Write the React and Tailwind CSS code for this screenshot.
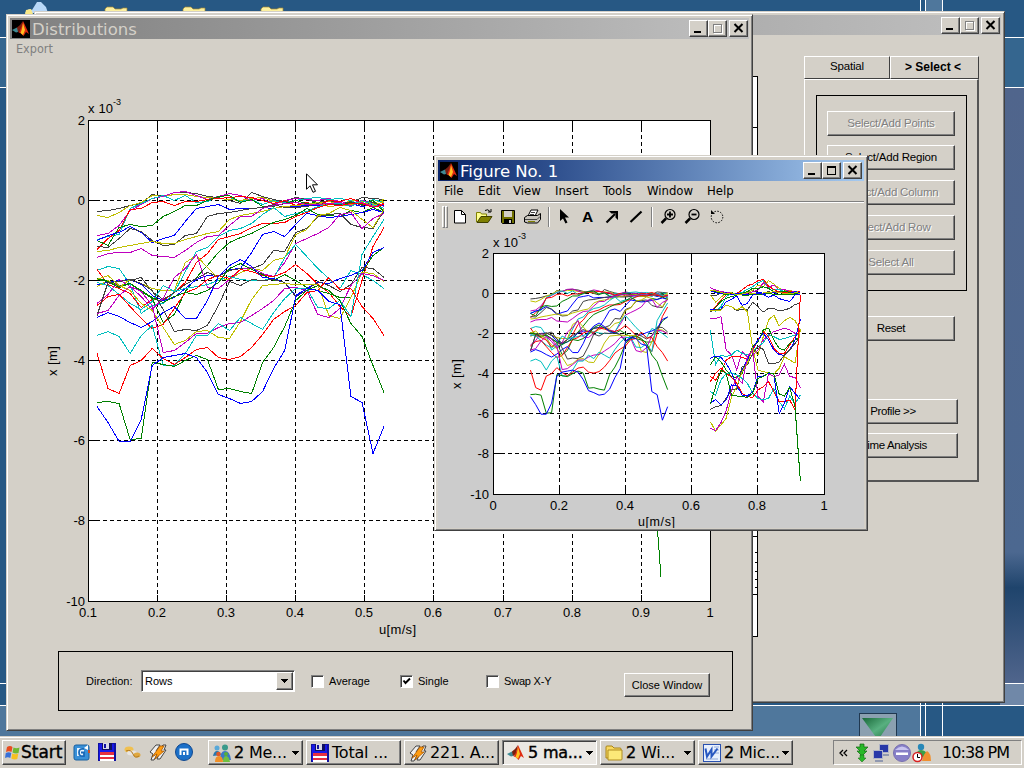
import React from "react";

const C = {
  b: "#0000ff", g: "#008000", r: "#ff0000", c: "#00bfbf", m: "#bf00bf", y: "#bfbf00", k: "#404040",
};

const LEFT = [
  ["k", [211, 210, 208, 205, 203, 194, 196, 192, 192, 193, 196, 197, 200, 203, 192, 196, 199, 201, 197, 199, 202, 200, 203, 202, 197, 198, 199]],
  ["y", [215, 217, 212, 205, 202, 195, 196, 194, 194, 196, 197, 198, 199, 200, 198, 197, 201, 202, 202, 205, 203, 201, 204, 200, 201, 203, 199]],
  ["m", [235, 233, 225, 210, 204, 198, 196, 192, 191, 195, 199, 196, 193, 195, 200, 198, 204, 200, 198, 199, 200, 198, 201, 203, 200, 202, 206]],
  ["c", [239, 236, 234, 208, 203, 198, 195, 200, 195, 202, 201, 196, 197, 201, 199, 204, 200, 202, 200, 198, 197, 199, 198, 200, 205, 199, 202]],
  ["r", [249, 238, 230, 209, 208, 202, 201, 205, 201, 201, 199, 198, 197, 196, 197, 200, 203, 200, 205, 202, 205, 200, 201, 198, 202, 206, 203]],
  ["g", [240, 245, 227, 224, 226, 225, 216, 211, 205, 205, 200, 196, 195, 202, 199, 206, 206, 203, 200, 203, 202, 206, 205, 202, 204, 200, 211]],
  ["b", [240, 235, 232, 226, 232, 242, 238, 235, 221, 208, 206, 204, 209, 208, 208, 207, 208, 206, 206, 205, 205, 203, 205, 203, 206, 204, 205]],
  ["k", [246, 247, 238, 228, 231, 240, 245, 244, 235, 233, 216, 213, 212, 210, 208, 207, 204, 207, 207, 206, 203, 204, 204, 201, 205, 202, 208]],
  ["y", [251, 250, 247, 245, 243, 241, 243, 243, 239, 236, 233, 231, 219, 215, 213, 211, 208, 206, 205, 204, 202, 206, 205, 204, 202, 205, 201]],
  ["m", [257, 253, 252, 252, 248, 255, 256, 257, 250, 242, 236, 235, 225, 216, 216, 208, 205, 203, 202, 204, 204, 203, 202, 205, 202, 206, 204]],
  ["c", [270, 266, 268, 284, 313, 305, 303, 292, 271, 251, 247, 236, 230, 228, 223, 214, 207, 216, 213, 211, 206, 204, 203, 206, 200, 204, 208]],
  ["r", [269, 284, 288, 293, 307, 299, 300, 292, 282, 262, 253, 239, 236, 233, 227, 223, 223, 222, 216, 212, 207, 204, 205, 203, 203, 207, 204]],
  ["g", [278, 280, 285, 283, 291, 298, 322, 314, 291, 277, 265, 252, 242, 237, 233, 227, 222, 219, 215, 208, 214, 215, 216, 210, 212, 207, 212]],
  ["b", [284, 282, 280, 279, 284, 295, 300, 297, 288, 279, 275, 276, 269, 268, 252, 234, 231, 236, 224, 213, 215, 217, 216, 214, 212, 209, 212]],
  ["k", [315, 282, 286, 280, 277, 291, 299, 292, 284, 278, 272, 276, 270, 268, 268, 264, 250, 251, 232, 228, 216, 214, 213, 224, 227, 228, 210]],
  ["y", [286, 280, 287, 279, 283, 288, 290, 290, 262, 255, 267, 278, 279, 272, 268, 270, 260, 257, 234, 229, 215, 213, 207, 210, 219, 227, 209]],
  ["m", [303, 294, 279, 286, 296, 309, 298, 277, 268, 254, 287, 288, 279, 269, 267, 273, 276, 262, 243, 238, 233, 227, 214, 212, 228, 218, 213]],
  ["c", [282, 285, 294, 303, 309, 301, 285, 291, 288, 286, 284, 280, 276, 279, 280, 280, 278, 257, 244, 256, 268, 278, 288, 270, 274, 280, 288]],
  ["r", [305, 296, 294, 306, 318, 328, 324, 308, 292, 288, 279, 275, 278, 269, 271, 275, 276, 272, 264, 273, 284, 292, 306, 316, 280, 246, 227]],
  ["g", [279, 281, 287, 283, 290, 297, 302, 296, 292, 294, 290, 282, 268, 263, 269, 274, 280, 274, 280, 287, 290, 293, 297, 297, 272, 255, 247]],
  ["b", [317, 312, 316, 322, 327, 321, 312, 306, 318, 318, 300, 276, 265, 259, 266, 277, 278, 282, 295, 288, 282, 283, 278, 275, 270, 252, 247]],
  ["k", [315, 282, 281, 279, 283, 290, 309, 331, 329, 330, 325, 305, 281, 285, 279, 280, 279, 282, 296, 290, 281, 285, 291, 284, 267, 268, 277]],
  ["y", [279, 275, 285, 290, 303, 310, 327, 344, 340, 331, 330, 337, 338, 321, 299, 285, 284, 283, 284, 284, 284, 315, 318, 297, 272, 273, 281]],
  ["m", [313, 310, 295, 286, 291, 305, 352, 350, 342, 333, 333, 327, 323, 322, 315, 308, 300, 288, 287, 290, 314, 317, 308, 285, 273, 275, 280]],
  ["c", [335, 331, 336, 353, 335, 325, 365, 365, 353, 335, 335, 323, 330, 317, 323, 329, 312, 298, 288, 288, 307, 308, 300, 316, 254, 236, 219]],
  ["r", [353, 388, 393, 365, 360, 348, 358, 364, 357, 349, 347, 357, 359, 356, 347, 334, 319, 311, 305, 292, 290, 277, 289, 288, 306, 318, 335]],
  ["g", [402, 401, 403, 439, 438, 362, 364, 366, 360, 355, 359, 389, 388, 391, 393, 362, 347, 326, 300, 290, 285, 290, 300, 323, 336, 365, 392]],
  ["b", [406, 422, 441, 441, 419, 365, 357, 355, 353, 357, 372, 394, 398, 403, 401, 391, 368, 350, 296, 288, 290, 301, 304, 396, 402, 453, 426]],
];

const RIGHT = [
  ["k", [165, 168, 158, 158, 160, 162, 160, 155, 152, 157, 160, 155, 158, 153, 158, 156, 155, 153]],
  ["y", [165, 186, 172, 160, 163, 160, 158, 155, 152, 135, 140, 122, 132, 145, 150, 152, 154, 156]],
  ["m", [143, 150, 155, 157, 160, 163, 160, 160, 155, 150, 128, 142, 135, 150, 148, 154, 156, 158]],
  ["c", [208, 214, 200, 170, 160, 164, 157, 148, 140, 128, 122, 140, 150, 148, 156, 155, 158, 156]],
  ["r", [215, 200, 180, 165, 160, 160, 150, 137, 132, 122, 118, 139, 148, 156, 158, 155, 158, 154]],
  ["g", [150, 155, 160, 165, 158, 162, 160, 155, 145, 147, 140, 145, 155, 158, 153, 158, 160, 159]],
  ["b", [152, 158, 162, 158, 164, 160, 164, 165, 163, 157, 160, 161, 158, 164, 160, 160, 155, 158]],
  ["g", [215, 203, 184, 175, 170, 165, 165, 166, 162, 165, 164, 160, 163, 162, 164, 162, 163, 163]],
  ["y", [150, 153, 157, 162, 158, 164, 162, 158, 162, 160, 159, 158, 155, 158, 160, 162, 158, 160]],
  ["b", [207, 209, 207, 185, 178, 168, 196, 190, 165, 160, 163, 172, 165, 176, 180, 185, 165, 162]],
  ["k", [215, 210, 210, 195, 200, 212, 208, 210, 187, 200, 216, 205, 205, 213, 210, 205, 193, 190]],
  ["y", [210, 212, 210, 195, 200, 210, 200, 215, 325, 345, 290, 240, 225, 258, 242, 232, 242, 270]],
  ["m", [235, 235, 230, 330, 345, 390, 335, 350, 345, 330, 300, 285, 275, 270, 265, 270, 280, 280]],
  ["c", [270, 375, 345, 350, 345, 330, 340, 345, 335, 320, 308, 285, 290, 298, 296, 290, 285, 282]],
  ["r", [410, 420, 395, 360, 350, 348, 352, 358, 330, 300, 275, 290, 325, 340, 340, 315, 290, 270]],
  ["g", [375, 350, 365, 390, 410, 412, 400, 360, 320, 305, 270, 265, 300, 325, 330, 310, 300, 290]],
  ["b", [355, 348, 352, 370, 398, 440, 390, 360, 325, 300, 280, 300, 330, 344, 346, 330, 300, 238]],
  ["k", [508, 500, 497, 475, 450, 448, 380, 375, 340, 320, 328, 370, 371, 366, 345, 330, 310, 290]],
  ["y", [545, 573, 555, 535, 470, 440, 395, 370, 325, 390, 395, 398, 402, 385, 350, 360, 369, 270]],
  ["m", [565, 572, 548, 512, 450, 410, 430, 350, 330, 470, 485, 400, 410, 405, 373, 410, 412, 443]],
  ["c", [455, 465, 420, 400, 398, 405, 415, 430, 460, 475, 480, 475, 445, 485, 506, 468, 492, 465]],
  ["r", [425, 400, 385, 400, 412, 430, 460, 470, 472, 450, 440, 425, 455, 485, 485, 480, 510, 165]],
  ["b", [490, 478, 495, 480, 435, 437, 465, 468, 455, 410, 408, 400, 402, 520, 490, 440, 460, 478]],
  ["g", [492, 440, 390, 400, 466, 468, 470, 472, 460, 415, 410, 398, 402, 462, 468, 442, 500, 722]],
];

const leftPts = (ys) => ys.map((y, i) => `${(97 + i * 11.04).toFixed(1)},${y + 0.5}`).join(" ");
const rightPts = (ys) => ys.map((y, i) => `${691 + i * 15.88},${y}`).join(" ");

function Lines({ data, pts }) {
  return data.map(([c, ys], i) => (
    <polyline key={i} points={pts(ys)} fill="none" stroke={C[c]} strokeWidth="1" vectorEffect="non-scaling-stroke" />
  ));
}

function Axes({ x0, x1, y0, y1, xs, ys }) {
  return (
    <g stroke="#000" fill="none">
      <rect x={x0} y={y0} width={x1 - x0} height={y1 - y0} fill="#fff" />
      {xs.slice(1, -1).map((x) => (
        <g key={x}>
          <path d={`M${x} ${y0}V${y1}`} strokeDasharray="4 3" />
          <path d={`M${x} ${y0}v7M${x} ${y1}v-7`} />
        </g>
      ))}
      {ys.slice(1, -1).map((y) => (
        <g key={y}>
          <path d={`M${x0} ${y}H${x1}`} strokeDasharray="4 3" />
          <path d={`M${x0} ${y}h7M${x1} ${y}h-7`} />
        </g>
      ))}
    </g>
  );
}

const PLOT_FONT = "[font-family:'Liberation_Sans',Arial,sans-serif]";
const WIDE_FONT = "[font-family:'DejaVu_Sans',Verdana,sans-serif]";
const MENU_FONT = "[font-family:'DejaVu_Sans_Condensed','DejaVu_Sans',Tahoma,sans-serif]";

function BigPlot() {
  const xs = [88.5, 157.5, 226.5, 295.5, 364.5, 433.5, 503.5, 572.5, 641.5, 710.5];
  const ys = [120.5, 200.5, 280.5, 360.5, 440.5, 520.5, 601.5];
  return (
    <svg width="690" height="554" viewBox="40 90 690 554" className={`block shrink-0 text-[13px] ${PLOT_FONT}`}>
      <g shapeRendering="crispEdges">
        <Axes x0={88.5} x1={710.5} y0={120.5} y1={601.5} xs={xs} ys={ys} />
        <Lines data={LEFT} pts={leftPts} />
        <path d="M655 500L657.5 530L661 577" fill="none" stroke={C.g} />
      </g>
      <text x="88" y="113" textLength="25">x 10</text>
      <text x="113" y="105" className="text-[9px]">-3</text>
      {["2", "0", "-2", "-4", "-6", "-8", "-10"].map((t, i) => (
        <text key={t} x="85" y={ys[i] + 4.5} textAnchor="end">{t}</text>
      ))}
      {["0.1", "0.2", "0.3", "0.4", "0.5", "0.6", "0.7", "0.8", "0.9", "1"].map((t, i) => (
        <text key={t} x={xs[i] - 0.5} y="616.5" textAnchor="middle">{t}</text>
      ))}
      <text x="379" y="634" textLength="37">u[m/s]</text>
      <text transform="translate(57 376) rotate(-90)" textLength="30">x [m]</text>
    </svg>
  );
}

function SmallPlot() {
  const xs = [493.5, 559.5, 625.5, 691.5, 757.5, 824.5];
  const ys = [253.5, 293.5, 333.5, 373.5, 413.5, 453.5, 494.5];
  return (
    <svg width="426" height="298" viewBox="438 230 426 298" className={`block ${PLOT_FONT} text-[13px]`}>
      <g shapeRendering="crispEdges">
        <Axes x0={493.5} x1={824.5} y0={253.5} y1={494.5} xs={xs} ys={ys} />
        <g transform="translate(484.1 193) scale(0.478 0.501)"><Lines data={LEFT} pts={leftPts} /></g>
        <g transform="translate(480 240) scale(0.33333)"><Lines data={RIGHT} pts={rightPts} /></g>
      </g>
      <text x="493" y="247" textLength="25">x 10</text>
      <text x="518" y="238.500" className="text-[9px]">-3</text>
      {["2", "0", "-2", "-4", "-6", "-8", "-10"].map((t, i) => (
        <text key={t} x="489" y={ys[i] + 4.5} textAnchor="end">{t}</text>
      ))}
      {["0", "0.2", "0.4", "0.6", "0.8", "1"].map((t, i) => (
        <text key={t} x={xs[i] - 0.5} y="510" textAnchor="middle">{t}</text>
      ))}
      <text x="638" y="525.500" textLength="37" className="text-[12.5px]">u[m/s]</text>
      <text transform="translate(461 389) rotate(-90)" textLength="30">x [m]</text>
    </svg>
  );
}

const RAISED = "border border-t-white border-l-white border-r-[#404040] border-b-[#404040] shadow-[inset_-1px_-1px_0_#808080] bg-[#d4d0c8]";
const SUNKEN = "border border-t-[#808080] border-l-[#808080] border-r-white border-b-white shadow-[inset_1px_1px_0_#404040]";
const FRAME = "absolute flex flex-col bg-[#d4d0c8] border border-t-[#d4d0c8] border-l-[#d4d0c8] border-r-[#404040] border-b-[#404040] shadow-[inset_1px_1px_0_#fff,inset_-1px_-1px_0_#808080] overflow-hidden";

function Caption({ maxDisabled }) {
  const btn = `flex w-[19px] h-[17px] ${RAISED}`;
  const s = maxDisabled ? "#808080" : "#000";
  return (
    <div className="flex shrink-0">
      <div className={btn}><svg width="17" height="15" shapeRendering="crispEdges"><path d="M4 10h7v2h-7z" /></svg></div>
      <div className={btn}>
        <svg width="17" height="15" shapeRendering="crispEdges">
          {maxDisabled && <path d="M5 4.500h8v8h-8z" fill="none" stroke="#fff" />}
          <path d="M4.500 3.500h8v8h-8z" fill="none" stroke={s} />
          {!maxDisabled && <path d="M4 3h9v2h-9z" />}
        </svg>
      </div>
      <div className={`ml-[2px] ${btn}`}><svg width="17" height="15"><path d="M4.500 3l8 8M12.500 3l-8 8" stroke="#000" strokeWidth="2" /></svg></div>
    </div>
  );
}

function MatlabShape() {
  return (
    <>
      <path d="M0 10L5 7.500L8 8.500L6 12L4 12.500Z" fill="#3f8a94" />
      <path d="M5 7.500L8 5L11 1L9 10L6 12Z" fill="#7a1e10" />
      <path d="M11 1Q13 5 17 14L14 12L11.500 16L8.500 13L6.500 12.500Q9 10 11 1Z" fill="#e02a10" />
      <path d="M11 3Q10 10 8.500 13L11 15L13 10Z" fill="#ffc020" />
    </>
  );
}
function MatlabIcon() {
  return (
    <svg width="18" height="18" viewBox="0 0 18 18" className="shrink-0">
      <rect width="18" height="18" fill="#000" />
      <MatlabShape />
    </svg>
  );
}

function SideButton({ children, disabled, className = "" }) {
  return (
    <div className={`flex h-[25px] w-[128px] shrink-0 items-center justify-center whitespace-nowrap ${RAISED} ${disabled ? "text-[#808080] [text-shadow:1px_1px_0_#fff]" : "text-black"} ${className}`}>
      {children}
    </div>
  );
}

function MainWindow() {
  return (
    <div className={`${FRAME} left-[34px] top-[11px] h-[692px] w-[971px]`}>
      <div className="mx-[3px] mt-[3px] flex h-[20px] shrink-0 items-center justify-end bg-gradient-to-r from-[#808080] to-[#c0c0c0] pr-px">
        <Caption maxDisabled />
      </div>
      <div className="flex justify-between pr-[25px] pt-[21px]">
        <div className="mt-[20px] flex h-[561px] w-[723px] justify-end border border-black bg-white">
          <svg width="4" height="559" shapeRendering="crispEdges"><path d="M0 50.500h4M0 459.500h4M0 517.500h4M2 475.500h2M2 485.500h2M2 494.500h2M2 502.500h2M2 510.500h2" stroke="#000" /></svg>
        </div>
        <div className={`flex w-[175px] flex-col text-[11px] ${PLOT_FONT}`}>
          <div className="flex h-[23px]">
            <div className="flex flex-1 items-center justify-center border border-b-[#404040] border-l-white border-r-[#404040] border-t-white pb-[2px] text-[11.5px] tracking-[-0.2px]">Spatial</div>
            <div className="flex flex-1 items-center justify-center border border-b-[#404040] border-l-white border-r-[#404040] border-t-white pb-[2px] pr-[3px] text-[12px] font-bold">&gt; Select &lt;</div>
          </div>
          <div className="flex h-[403px] flex-col border border-b-2 border-r-2 border-b-[#555] border-l-white border-r-[#555] border-t-white pl-[11px]">
            <div className="mt-[15px] flex h-[196px] w-[151px] shrink-0 flex-col gap-[10px] border border-black pl-[10px] pt-[15px] text-[11.5px] tracking-[-0.2px]">
              <SideButton disabled>Select/Add Points</SideButton>
              <SideButton className="-mt-px">Select/Add Region</SideButton>
              <SideButton disabled>Select/Add Column</SideButton>
              <SideButton disabled>Select/Add Row</SideButton>
              <SideButton disabled>Select All</SideButton>
            </div>
            <div className="flex flex-col pl-[11px] pt-[25px] text-[11.5px] tracking-[-0.35px]">
              <SideButton>Reset</SideButton>
              <SideButton className="ml-[3px] mt-[58px] pr-[2px]">Profile &gt;&gt;</SideButton>
              <SideButton className="ml-[3px] mt-[9px]">Time Analysis</SideButton>
            </div>
          </div>
        </div>
      </div>
    </div>
  );
}

function Check({ label, checked, className }) {
  return (
    <div className={`flex items-center gap-[5px] ${className}`}>
      <div className={`h-[13px] w-[13px] bg-white ${SUNKEN}`}>
        {checked && <svg width="11" height="11" className="block"><path d="M2.500 4.500L4.500 7L9 2.500" fill="none" stroke="#000" strokeWidth="2" /></svg>}
      </div>
      <span className="whitespace-nowrap">{label}</span>
    </div>
  );
}

function DistributionsWindow() {
  return (
    <div className={`${FRAME} left-[6px] top-[14px] h-[717px] w-[747px]`}>
      <div className="mx-[3px] mt-[3px] flex h-[21px] shrink-0 items-center bg-gradient-to-r from-[#808080] to-[#c0c0c0] pl-[2px] pr-px">
        <MatlabIcon />
        <span className={`ml-[2px] flex-1 pt-[2px] text-[16.500px] leading-[19px] text-[#d4d0c8] ${WIDE_FONT}`}>Distributions</span>
        <Caption maxDisabled />
      </div>
      <div className={`ml-[9px] mt-px h-[18px] shrink-0 text-[12.5px] leading-[18px] text-[#808080] ${MENU_FONT}`}>Export</div>
      <div className="ml-[33px] mt-[32px] shrink-0"><BigPlot /></div>
      <div className={`ml-[51px] mt-[7px] flex h-[60px] w-[675px] shrink-0 items-center border border-black pl-[27px] text-[11px] ${PLOT_FONT}`}>
        <span className="w-[55px]">Direction:</span>
        <div className={`flex h-[22px] w-[154px] items-center bg-white p-px pl-[3px] ${SUNKEN}`}>
          <span className="flex-1 pt-px">Rows</span>
          <div className={`flex h-[18px] w-[17px] items-center justify-center ${RAISED}`}>
            <svg width="7" height="4" shapeRendering="crispEdges"><path d="M0 0h7L3.500 4z" /></svg>
          </div>
        </div>
        <Check label="Average" className="ml-[16px] w-[89px]" />
        <Check label="Single" checked className="w-[86px]" />
        <Check label="Swap X-Y" className="w-[138px] tracking-[-0.2px]" />
        <div className={`mt-[8px] flex h-[24px] w-[86px] items-center justify-center whitespace-nowrap ${RAISED}`}>Close Window</div>
      </div>
    </div>
  );
}

function Toolbar() {
  const sep = "h-[20px] w-[2px] border-l border-l-[#808080] border-r border-r-white";
  return (
    <div className="flex h-[28px] shrink-0 items-center border-t border-white pl-[4px]">
      <div className="h-[22px] w-[3px] border border-l-white border-t-white border-r-[#808080] border-b-[#808080]" />
      <div className="h-[22px] w-[3px] border border-l-white border-t-white border-r-[#808080] border-b-[#808080]" />
      <svg width="100" height="20" viewBox="448 207 100 20">
        <path d="M454.500 210.500h7l4 4v8.500h-11z" fill="#fff" stroke="#000" />
        <path d="M461.500 210.500v4h4" fill="none" stroke="#000" />
        <path d="M476.500 222V212.500h4l1 1.500h5v3" fill="#ffff90" stroke="#808000" />
        <path d="M477 222.500l4-6h11l-4 6z" fill="#808000" stroke="#404000" />
        <path d="M485 210.500q3-2 5 1M491 209v3h-3" fill="none" stroke="#000" />
        <path d="M501.500 210.500h13v13h-12l-1-1z" fill="#707000" stroke="#000" />
        <path d="M504 211h8v6h-8z" fill="#d4d0c8" />
        <path d="M504 219h8v5h-8z" fill="#000" /><path d="M509 220h2v3h-2z" fill="#d4d0c8" />
        <path d="M528 216l3-6h7l-3 6" fill="#fff" stroke="#000" />
        <path d="M524.500 217.500l3-2h10l3-2v6l-3 3.500h-10l-3-1z" fill="#c8c4bc" stroke="#000" />
        <path d="M525 219.500h12l3-3M531 212.500h4M530 214.500h4" fill="none" stroke="#444" />
        <path d="M528 221.500h7" stroke="#808000" />
      </svg>
      <div className={sep} />
      <svg width="100" height="20" viewBox="550 207 100 20">
        <path d="M560 209v12l3-2.500l2.500 5l2-1l-2.500-5h4z" />
        <text x="582" y="222" fontSize="15.5" fontWeight="bold" className={PLOT_FONT}>A</text>
        <path d="M606.500 222.500L615 214" stroke="#000" strokeWidth="2.200" /><path d="M609 211h9v9l-2.500-2.500v-4h-4z" />
        <path d="M630.500 222L641.500 211.500" stroke="#000" strokeWidth="2.200" />
      </svg>
      <div className={`ml-px ${sep}`} />
      <svg width="80" height="20" viewBox="653 207 80 20" fill="none" stroke="#000">
        <circle cx="670" cy="214.500" r="5" strokeWidth="1.200" /><path d="M667 214.500h6M670 211.500v6" strokeWidth="1.800" /><path d="M666 218.500l-4.500 4.500" strokeWidth="2.500" />
        <circle cx="694" cy="214.500" r="5" strokeWidth="1.200" /><path d="M691.500 214.500h5" strokeWidth="1.800" /><path d="M690 218.500l-4.500 4.500" strokeWidth="2.500" />
        <circle cx="717" cy="217" r="5.800" strokeDasharray="1.500 1.500" /><path d="M711 210v4h4z" fill="#000" stroke="none" />
      </svg>
    </div>
  );
}

function FigureWindow() {
  return (
    <div className={`${FRAME} left-[434px] top-[155px] h-[376px] w-[434px]`}>
      <div className="mx-[3px] mt-[4px] flex h-[21px] shrink-0 items-center bg-gradient-to-r from-[#0a246a] to-[#a6caf0] pl-[2px] pr-[2px]">
        <MatlabIcon />
        <span className={`ml-[2px] flex-1 pt-[2px] text-[16.500px] leading-[19px] tracking-[-0.05px] text-white ${WIDE_FONT}`}>Figure No. 1</span>
        <Caption />
      </div>
      <div className={`mx-[3px] flex h-[21px] shrink-0 items-center border-b border-[#808080] text-[13px] text-black ${MENU_FONT}`}>
        <span className="ml-[6px] w-[34px]">File</span>
        <span className="w-[35px]">Edit</span>
        <span className="w-[42px]">View</span>
        <span className="w-[48px]">Insert</span>
        <span className="w-[44px]">Tools</span>
        <span className="w-[60px]">Window</span>
        <span>Help</span>
      </div>
      <div className="mx-[3px]"><Toolbar /></div>
      <div className="mx-[3px] h-[298px] shrink-0 bg-[#cccccc]"><SmallPlot /></div>
    </div>
  );
}

function Floppy() {
  return (
    <svg width="18" height="18" viewBox="0 0 18 18" shapeRendering="crispEdges" className="shrink-0">
      <path d="M0 0h17l1 1v17h-18z" fill="#1010a0" /><path d="M1 1h15v16h-15z" fill="#1818e8" />
      <path d="M4 0h10v7h-10z" fill="#101060" /><path d="M5 0h6v6h-6z" fill="#d8d8e8" /><path d="M6 1h2v4h-2z" fill="#1010a0" />
      <path d="M2 9h14v9h-14z" fill="#fff" /><path d="M2 9h14v3h-14zM2 14h14v2h-14z" fill="#e83040" />
    </svg>
  );
}
function Winamp() {
  return (
    <svg width="18" height="18" viewBox="0 0 18 18" className="shrink-0">
      <path d="M1 9l6-7h4l-4 6h3l-5 9H2l2-6z" fill="#eee" stroke="#444" />
      <path d="M9 8l5-6h3l-2 5h2l-6 9H8l2-5z" fill="#eee" stroke="#444" />
      <path d="M3 14L11 3h4l-3 5h3L6 16l2-5z" fill="#ff9c10" stroke="#a85800" strokeWidth=".8" />
    </svg>
  );
}
function Messenger() {
  return (
    <svg width="18" height="18" viewBox="0 0 18 18" className="shrink-0">
      <circle cx="12" cy="3.500" r="3" fill="#3a9a8a" /><path d="M7 16q0-9 5-9t6 9z" fill="#3c78c8" />
      <circle cx="4" cy="4" r="2.500" fill="#58a8d8" /><path d="M0 12q1-5 4-5t4 4z" fill="#2878b0" />
      <circle cx="5.500" cy="10" r="2.300" fill="#e05828" /><path d="M2 18q0-6 4-6t4 6z" fill="#f09028" />
      <circle cx="13" cy="10" r="2" fill="#58b038" /><path d="M10 18q0-6 3-6t4 6z" fill="#70c040" />
    </svg>
  );
}
function FolderIcon() {
  return (
    <svg width="18" height="18" viewBox="0 0 18 18" className="shrink-0">
      <path d="M1 3q0-1 1-1h5l2 2h6q1 0 1 1v9H1z" fill="#f8d860" stroke="#a88418" />
      <path d="M3 6h14v9q0 1-1 1H3z" fill="#fce878" stroke="#b08c20" />
    </svg>
  );
}
function WordIcon() {
  return (
    <svg width="18" height="18" viewBox="0 0 18 18" className="shrink-0">
      <rect x=".5" y=".5" width="17" height="17" fill="#e8f0fc" stroke="#2850b0" />
      <path d="M11 3h5M11 6h5M12 9h4M3 15h12" stroke="#90a8d8" />
      <path d="M2.500 4.500l1.500 8l4.500-7v7l6-8" fill="none" stroke="#2858c0" strokeWidth="2" />
    </svg>
  );
}

function Task({ icon, count, label, arrow, active }) {
  return (
    <div className={`flex h-[25px] w-[95px] shrink-0 items-center whitespace-nowrap pl-[4px] text-[16px] text-black ${WIDE_FONT} ${active ? `${SUNKEN} bg-[#ebe8e3]` : RAISED}`}>
      {icon}
      <span className="ml-[3px] flex-1 pt-px tracking-[-0.2px]">{count && <span className="[-webkit-text-stroke:0.4px_black]">{count} </span>}{label}</span>
      {arrow && <svg width="7" height="4" className="mr-[3px] shrink-0" shapeRendering="crispEdges"><path d="M0 0h7L3.500 4z" /></svg>}
    </div>
  );
}

function Taskbar() {
  return (
    <div className="absolute bottom-0 left-0 flex h-[32px] w-[1024px] items-start border-t border-[#d4d0c8] bg-[#d4d0c8] pt-[3px] shadow-[inset_0_1px_0_#fff]">
      <div className={`ml-[2px] flex h-[25px] w-[64px] shrink-0 items-center pl-[2px] ${RAISED}`}>
        <svg width="15" height="16" viewBox="0 0 15 16" className="shrink-0">
          <path d="M2 2q3-2 5.500 0l-1 5Q4 5.500 1 7z" fill="#e84c20" /><path d="M8.500 2.500q3 1.500 6 0l-1 5.500q-3 1-6-.5z" fill="#70b830" />
          <path d="M.8 8q3-1.500 5.500 0l-1 5Q3 11.500 0 13z" fill="#3870d8" /><path d="M7.300 8.500q3 1.500 6 0l-1 5.500q-3 1-6-.5z" fill="#f8c020" />
        </svg>
        <span className={`ml-px text-[17px] [-webkit-text-stroke:0.4px_black] ${WIDE_FONT}`}>Start</span>
      </div>
      <div className="ml-[7px] mt-[3px] flex gap-[8px]">
        <svg width="17" height="18" viewBox="0 0 17 18">
          <rect x="1" y="2" width="15" height="15" rx="2" fill="#3890d8" stroke="#1860a0" /><path d="M4 5h7v8h-7z" fill="#e8f4ff" />
          <path d="M11 6Q6 5 6 9.500T11 13V9.500H8" fill="none" stroke="#1868b8" strokeWidth="1.800" /><path d="M11 5l4-3v5z" fill="#fff" /><path d="M15 7h2v3h-2z" fill="#d05020" />
        </svg>
        <Floppy />
        <svg width="17" height="18" viewBox="0 0 17 18"><ellipse cx="5" cy="6.500" rx="4.500" ry="3" fill="#f0c050" /><ellipse cx="8" cy="10" rx="5" ry="2.500" fill="#e8e4e0" /><ellipse cx="13" cy="12" rx="3.500" ry="2.500" fill="#e0a840" /><path d="M2 8q5-2 7 3t6 2" fill="none" stroke="#b07820" /></svg>
        <Winamp />
        <svg width="18" height="18" viewBox="0 0 18 18"><circle cx="9" cy="9" r="8.500" fill="#1c70c8" stroke="#104890" /><path d="M5.500 12V6.500h7v5.500M9 12V9" fill="none" stroke="#fff" strokeWidth="2" /></svg>
      </div>
      <div className="ml-[15px] flex gap-[3px]">
        <Task icon={<Messenger />} count="2" label="Me..." arrow />
        <Task icon={<Floppy />} label="Total ..." />
        <Task icon={<Winamp />} label="221. A..." />
        <Task icon={<svg width="18" height="18" viewBox="0 0 18 18" className="shrink-0"><MatlabShape /></svg>} count="5" label={<span className="[-webkit-text-stroke:0.4px_black]">ma...</span>} arrow active />
        <Task icon={<FolderIcon />} count="2" label="Wi..." arrow />
        <Task icon={<WordIcon />} count="2" label="Mic..." arrow />
      </div>
      <div className={`ml-[40px] flex h-[25px] w-[189px] items-center border border-b-white border-l-[#808080] border-r-white border-t-[#808080] pl-[5px] ${WIDE_FONT}`}>
        <svg width="9" height="8" fill="none" stroke="#000" strokeWidth="1.300"><path d="M4 1L1 4l3 3M8 1L5 4l3 3" /></svg>
        <svg width="80" height="20" viewBox="853 743 80 20" className="ml-[5px]">
          <path d="M859 744h4v3h4l-4 4h3l-5 5l-5-5h3l-4-4h4z" transform="translate(1 0)" fill="#28b828" stroke="#106810" strokeWidth=".7" /><path d="M860 755h4v3h2l-4 4l-4-4h2z" fill="#28b828" stroke="#106810" strokeWidth=".5" />
          <rect x="879.500" y="744.500" width="9" height="8" fill="#2838a8" stroke="#b0b4c8" /><path d="M882 754h7v2h-7z" fill="#9098b0" />
          <rect x="873.500" y="750.500" width="9" height="8" fill="#2838a8" stroke="#b0b4c8" /><path d="M875 760h8v2h-8z" fill="#9098b0" />
          <circle cx="902" cy="753" r="8.500" fill="#8880c8" stroke="#7870b0" /><path d="M895 750q7-7 14 0z" fill="#c8c4f0" /><path d="M896 752.500h12v2.500h-12z" fill="#fff" />
          <circle cx="921" cy="747" r="3.200" fill="#2888b8" /><path d="M916 758q0-8 5-8t7 6z" fill="#38a048" />
          <path d="M922 761q2-8 5-10q4 2 4 10z" fill="#f09030" /><circle cx="917.500" cy="757" r="4.500" fill="#fff" stroke="#d82020" strokeWidth="1.500" /><path d="M917.500 754v3.500h2.500" fill="none" stroke="#000" />
        </svg>
        <span className="ml-[9px] whitespace-nowrap pt-px text-[16px] tracking-[-0.95px]">10:38 PM</span>
      </div>
    </div>
  );
}

function Desktop() {
  return (
    <svg width="1024" height="768" viewBox="0 0 1024 768" className="block">
      <defs>
        <linearGradient id="side" x1="0" y1="0" x2="0" y2="1">
          <stop offset="0" stopColor="#50658c" /><stop offset=".78" stopColor="#4c6890" /><stop offset=".84" stopColor="#1f446c" /><stop offset="1" stopColor="#50658c" />
        </linearGradient>
        <linearGradient id="gem" x1="0" y1="0" x2="1" y2="1"><stop offset="0" stopColor="#186838" /><stop offset=".5" stopColor="#58b080" /><stop offset="1" stopColor="#186838" /></linearGradient>
      </defs>
      <rect width="1024" height="768" fill="#275884" />
      <rect y="37" width="1024" height="50" fill="#35668f" />
      <rect x="1000" y="88" width="24" height="595" fill="url(#side)" />
      <rect x="1000" y="683" width="24" height="22" fill="#7088a8" />
      <rect y="706" width="920" height="32" fill="#4f779c" />
      <rect x="926" width="16" height="13" fill="#4f779c" />
      <path d="M0 37.500h1024M0 87.500h1024M0 683.500h1024M0 705.500h1024M920.500 0v768M925.500 0v768M942.500 0v768" stroke="#fff" shapeRendering="crispEdges" />
      <path d="M25 13l4-4l3 1l5-8h4l5 5l2 6z" fill="#b8d8f8" /><path d="M25 14l1-4l5-1l2 5z" fill="#f8e888" />
      {[105, 183, 261].map((x) => (
        <path key={x} d={`M${x} 13V9l2-2h6l2 2h6l2-1h4v3l2 2z`} fill="#fcf0a0" stroke="#a08830" strokeWidth=".7" />
      ))}
      <rect x="6" y="204" width="2" height="9" fill="#fff" />
      <rect x="859.500" y="713.500" width="37" height="30" fill="#8ba0b0" stroke="#203850" />
      <path d="M862 718h31l-15 22z" fill="url(#gem)" />
    </svg>
  );
}

export default function App() {
  return (
    <div className="relative h-[768px] w-[1024px] overflow-hidden bg-[#275884]">
      <Desktop />
      <MainWindow />
      <DistributionsWindow />
      <FigureWindow />
      <svg width="13" height="21" viewBox="0 0 13 21" className="absolute left-[306px] top-[173px]">
        <path d="M.5 .8v15.500l3.500-3.500l3 6.500l2.500-1l-3-6.500h5z" fill="#fff" stroke="#000" />
      </svg>
      <Taskbar />
    </div>
  );
}
